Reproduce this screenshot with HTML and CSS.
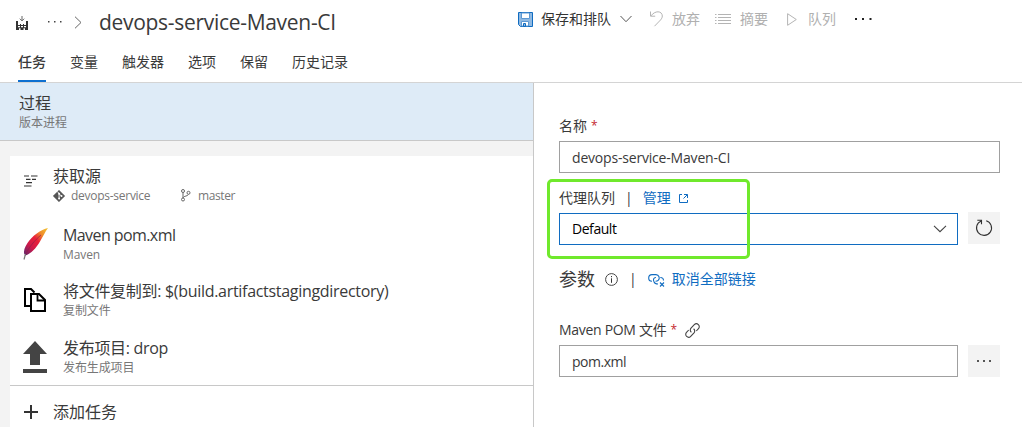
FILE: index.html
```html
<!DOCTYPE html>
<html lang="zh-CN">
<head>
<meta charset="utf-8">
<title>devops-service-Maven-CI</title>
<link rel="stylesheet" href="styles.css">
</head>
<body>
<div class="app">
  <header class="header">
    <div class="topbar">
      <div class="crumbs">
        <svg class="crumb-build" width="12" height="14" viewBox="0 0 12 14"><path d="M0 5h2v3h8V5h2v9H0z" fill="#333"/><path d="M2 7.500h2V9H2zM5 7.500h2V9H5zM8 7.500h2V9H8zM2 10h2v1.300H2zM5 10h2v1.300H5zM8 10h2v1.300H8zM3 12.300h1.500V14H3zM7.500 12.300H9V14H7.500z" fill="#fff"/><path d="M6 0v4.500M3.800 2.700L6 4.900l2.200-2.200" fill="none" stroke="#666"/></svg>
        <svg class="crumb-dots" width="16" height="4" viewBox="0 0 16 4" fill="#444"><path d="M1 1h1.500v1.500H1zM7 1h1.500v1.500H7zM13 1h1.500v1.500H13z"/></svg>
        <svg class="crumb-arrow" width="8" height="13" viewBox="0 0 8 13" fill="none" stroke="#666"><path d="M1 .7l6 5.800-6 5.800"/></svg>
        <h1 class="title">devops-service-Maven-CI</h1>
      </div>
      <div class="commands">
        <button class="command save">
          <svg width="15" height="15" viewBox="0 0 15 15"><path d="M.5.5h14v14h-12l-2-2z" fill="#8fb9e2" stroke="#106cc1"/><path d="M3.500 1h8v5.500h-8z" fill="#fff" stroke="#5c98d3"/><path d="M3.500 14v-4.500h7V14z" fill="#fff" stroke="#5c98d3"/><path d="M5.500 11.500h2v3h-2z" fill="#8fb9e2" stroke="#106cc1"/></svg>
          <span>保存和排队</span>
          <svg class="caret" width="12" height="8" viewBox="0 0 12 8" fill="none" stroke="#555"><path d="M.5 1L6 6.700 11.500 1"/></svg>
        </button>
        <button class="command discard">
          <svg width="14" height="16" viewBox="0 0 14 16" fill="none" stroke="#b4b4b4"><path d="M1.500.5v4.700h4.700M1.800 5C4 2.200 6.500.8 9 .8c2.700 0 4.300 2 4.300 4.200 0 1.700-.8 2.800-1.800 4L5.500 15.200"/></svg>
          <span>放弃</span>
        </button>
        <button class="command summary">
          <svg width="16" height="12" viewBox="0 0 16 12" stroke="#b4b4b4"><path d="M0 1.500h1.500M3 1.500h13M0 4.500h1.500M3 4.500h13M0 7.500h1.500M3 7.500h13M0 10.500h1.500M3 10.500h13"/></svg>
          <span>摘要</span>
        </button>
        <button class="command queue">
          <svg width="10" height="13" viewBox="0 0 10 13" fill="none" stroke="#b4b4b4"><path d="M.6.7l8.700 5.800-8.700 5.800z"/></svg>
          <span>队列</span>
        </button>
        <svg class="more" width="17" height="4" viewBox="0 0 17 4" fill="#222"><path d="M0 1h2v2H0zM7 1h2v2H7zM14.500 1h2v2h-2z"/></svg>
      </div>
    </div>
    <nav class="tabs">
      <a class="tab active">任务</a><a class="tab">变量</a><a class="tab">触发器</a><a class="tab">选项</a><a class="tab">保留</a><a class="tab">历史记录</a>
    </nav>
  </header>
  <main class="content">
    <section class="pipeline">
      <div class="process">
        <div class="process-title">过程</div>
        <div class="process-sub">版本进程</div>
      </div>
      <div class="phase">
        <div class="task source">
          <div class="task-icon">
            <svg width="15" height="12" viewBox="0 0 15 12" stroke="#333" stroke-width="1.200"><path d="M1 1h5M8 1h6.500M3 4.300h4.500M9 4.300h4M3 7.600h6M1 11h7.500"/></svg>
          </div>
          <div class="task-text">
            <div class="task-title">获取源</div>
            <div class="task-sub source-info">
              <svg width="12" height="12" viewBox="0 0 12 12"><path d="M6 .2L11.800 6 6 11.800.2 6z" fill="#555" stroke="#555" stroke-linejoin="round" stroke-width=".5"/><path d="M4.500 1.500l1.600 2.200v5M6.200 3.900l2.300 2.200" fill="none" stroke="#fff" stroke-width=".9"/><circle cx="6.100" cy="8.600" r="1" fill="#fff"/><circle cx="8.500" cy="6.100" r="1" fill="#fff"/><circle cx="6.100" cy="3.800" r="1" fill="#fff"/></svg>
              <span class="repo">devops-service</span>
              <svg width="10" height="13" viewBox="0 0 10 13" fill="none" stroke="#666"><circle cx="2" cy="2" r="1.500"/><circle cx="2" cy="10.500" r="1.500"/><circle cx="7.500" cy="3.800" r="1.500"/><path d="M2 3.500V9M7.300 5.400C7 7.500 3 6.500 2 8.800"/></svg>
              <span class="branch">master</span>
            </div>
          </div>
        </div>
        <div class="task">
          <div class="task-icon">
            <svg width="26" height="32" viewBox="0 0 26 32"><defs><linearGradient id="feather" x1="1" y1="0" x2="0" y2="1"><stop offset="0" stop-color="#f4c62c"/><stop offset=".25" stop-color="#ee8a2c"/><stop offset=".45" stop-color="#e8203a"/><stop offset=".7" stop-color="#d01848"/><stop offset="1" stop-color="#5b2870"/></linearGradient></defs><path d="M25 0C18 1.500 9 8 4.500 15 1.500 19.500.5 23 1.200 26L3 27.200C8 25.500 13 20.500 17 13.500 20 8.500 22 4 25 0z" fill="url(#feather)"/><path d="M18 7C12 12 5 20 2 28" fill="none" stroke="#8f2047" stroke-width=".7"/><path d="M2.500 26L1 31.500" stroke="#777" stroke-width="1.200"/></svg>
          </div>
          <div class="task-text"><div class="task-title maven">Maven pom.xml</div><div class="task-sub">Maven</div></div>
        </div>
        <div class="task">
          <div class="task-icon">
            <svg width="23" height="24" viewBox="0 0 23 24" fill="none" stroke="#000" stroke-width="2"><path d="M7 18H2V1h6l3.500 3.500"/><path d="M8 6h8l6 6v11H8z" fill="#fff"/><path d="M14.500 6v6.500H22" stroke-width="1.800"/></svg>
          </div>
          <div class="task-text"><div class="task-title copy">将文件复制到: $(build.artifactstagingdirectory)</div><div class="task-sub">复制文件</div></div>
        </div>
        <div class="task">
          <div class="task-icon">
            <svg width="24" height="32" viewBox="0 0 24 32" fill="#444"><path d="M12 0l12 13h-7v11H7V13H0zM0 28h24v4H0z"/></svg>
          </div>
          <div class="task-text"><div class="task-title drop">发布项目: drop</div><div class="task-sub">发布生成项目</div></div>
        </div>
        <div class="add-task">
          <svg width="14" height="14" viewBox="0 0 14 14" stroke="#333" stroke-width="2"><path d="M7 0v14M0 7h14"/></svg>
          <span>添加任务</span>
        </div>
      </div>
    </section>
    <section class="details">
      <div class="label name-label">名称 <span class="required">*</span></div>
      <div class="field name-field">devops-service-Maven-CI</div>
      <div class="label queue-label">
        <span>代理队列</span><span class="bar">|</span><a class="link">管理</a>
        <svg width="9" height="9" viewBox="0 0 9 9" fill="none" stroke="#106cc1"><path d="M3 .5H.5v8h8V6M5 .5h3.500V4M8.300.7L4.500 4.500"/></svg>
        <div class="highlight"></div>
      </div>
      <div class="row">
        <div class="field select"><span>Default</span>
          <svg width="14" height="8" viewBox="0 0 14 8" fill="none" stroke="#444" stroke-width="1.100"><path d="M1 .8l6 5.900L13 .8"/></svg>
        </div>
        <button class="square refresh">
          <svg width="18" height="18" viewBox="0 0 18 18" fill="none" stroke="#333" stroke-width="1.100"><path d="M11.200 1.700A7.500 7.500 0 1 1 6.300 1.900M2.300 1.300h4.200v4"/></svg>
        </button>
      </div>
      <div class="params">
        <h2 class="params-title">参数</h2>
        <svg class="info" width="13" height="13" viewBox="0 0 13 13"><circle cx="6.500" cy="6.500" r="5.900" fill="none" stroke="#444"/><path d="M6.500 5.300v4.500M6.500 3v1.200" stroke="#333"/></svg>
        <span class="params-bar">|</span>
        <svg class="unlink" width="17" height="14" viewBox="0 0 17 14" fill="none" stroke="#106cc1" stroke-width="1.100"><path d="M4 8.200A3.300 3.300 0 0 1 4 1.600h4a3.300 3.300 0 0 1 2.200 5.700M10.200 7.300C9.500 8 8.800 8.200 7.500 8.200M6 8.600C5 7 5.300 4.500 8 4.500M12.300 4.500c2 0 3.200 1.500 3.200 3M6 8.700c.6 1.600 1.800 2.300 4 2.300" /><path d="M12 9.500l4 4M16 9.500l-4 4"/></svg>
        <a class="link">取消全部链接</a>
      </div>
      <div class="label pom-label">
        <span>Maven POM 文件</span><span class="required">*</span>
        <svg width="15" height="15" viewBox="0 0 15 15" fill="none" stroke="#444" stroke-width="1.100"><path d="M6.400 9.300A2.800 2.800 0 0 1 6 5.200L9.300 1.700a2.800 2.800 0 0 1 4.200 3.900L11.300 8M8.600 5.700A2.800 2.800 0 0 1 9 9.800l-3.300 3.500a2.800 2.800 0 0 1-4.200-3.900L3.700 7"/></svg>
      </div>
      <div class="row">
        <div class="field pom">pom.xml</div>
        <button class="square">
          <svg width="16" height="2" viewBox="0 0 16 2" fill="#555"><path d="M1 0h2v2H1zM7 0h2v2H7zM13 0h2v2h-2z"/></svg>
        </button>
      </div>
    </section>
  </main>
</div>
</body>
</html>
```

FILE: styles.css
```css
* { box-sizing: border-box; }
body {
  margin: 0;
  color: #3a3a3a;
  background: #fff;
  font: 14px/20px "Open Sans", "Noto Sans CJK SC", sans-serif;
}
svg { display: block; flex: none; }
button { font: inherit; border: 0; padding: 0; margin: 0; background: none; color: inherit; }
.app { width: 1022px; height: 427px; overflow: hidden; display: flex; flex-direction: column; }

.header { height: 83px; flex: none; border-bottom: 1px solid #d4d4d4; }
.topbar { display: flex; height: 42px; }
.crumbs { display: flex; align-items: center; width: 518px; padding-left: 16px; }
.crumb-build { margin-top: 4px; }
.crumb-dots { margin: 2px 0 0 19px; }
.crumb-arrow { margin: 2px 0 0 11px; }
.title { margin: 2px 0 0 17px; font-size: 21px; line-height: 30px; font-weight: 400; letter-spacing: -.3px; }
.commands { display: flex; align-items: center; height: 38px; }
.command { display: flex; align-items: center; white-space: nowrap; color: #b0b0b0; }
.save { color: #333; width: 131px; }
.save span { margin-left: 8px; }
.caret { margin-left: 9px; }
.discard { width: 66px; }
.discard span { margin-left: 9px; }
.summary { width: 72px; }
.summary span { margin-left: 9px; }
.queue { width: 68px; }
.queue span { margin-left: 11px; }

.tabs { display: flex; gap: 24px; height: 40px; padding-left: 18px; }
.tab { height: 40px; line-height: 40px; }
.tab.active { font-weight: 500; border-bottom: 2px solid #0f70d0; }

.content { display: flex; flex: 1; min-height: 0; }
.pipeline { width: 534px; border-right: 1px solid #c8c8c8; background: #f3f3f3; }
.process { height: 58px; padding: 10px 0 0 19px; background: #deebf7; border-bottom: 1px solid #c8c8c8; }
.process-title { font-size: 16px; line-height: 20px; }
.process-sub { font-size: 12px; line-height: 20px; color: #777; }
.phase { margin: 15px 0 0 10px; background: #fff; height: 280px; }
.task { display: flex; height: 56px; padding-top: 8px; }
.task-icon { width: 53px; padding-left: 13px; }
.task-title { font-size: 16px; line-height: 22px; white-space: nowrap; }
.maven { letter-spacing: -.58px; }
.copy { letter-spacing: -.3px; }
.drop { letter-spacing: -.3px; }
.task-sub { font-size: 12px; line-height: 17px; color: #777; letter-spacing: -.1px; }
.source { height: 60px; padding-top: 9px; }
.source .task-icon { width: 43px; padding-top: 10px; }
.source-info { display: flex; align-items: center; letter-spacing: -.27px; }
.repo { width: 110px; margin-left: 6px; }
.branch { margin-left: 7px; letter-spacing: -.4px; }
.task:nth-child(2) .task-icon { padding-top: 4px; }
.task:nth-child(3) .task-icon { padding-top: 8px; }
.task:nth-child(4) .task-icon { padding-top: 5px; }
.task:nth-child(4) .task-text { padding-top: 1px; }
.add-task { display: flex; align-items: center; gap: 15px; height: 53px; margin-top: 1px; padding-left: 14px; border-top: 1px solid #c8c8c8; font-size: 16px; }

.details { flex: 1; padding: 33px 22px 0 25px; }
.label { display: flex; align-items: center; height: 20px; }
.name-label { gap: 4px; }
.required { color: #c4262e; font-size: 12px; }
.field { height: 32px; padding-left: 12px; border: 1px solid #a0a0a0; line-height: 32px; }
.name-field { margin-top: 5px; letter-spacing: -.19px; }
.row { display: flex; gap: 10px; }
.row .field { width: 399px; }
.pom { letter-spacing: -.5px; }
.square { display: flex; align-items: center; justify-content: center; width: 32px; height: 32px; background: #f3f3f3; }
.refresh { margin-top: -1px; }
.link { color: #106cc1; }
.queue-label { position: relative; margin: 15px 0 5px; }
.bar { margin: 0 10px 0 10px; }
.queue-label svg { margin-left: 8px; }
.highlight { position: absolute; left: -12px; top: -9px; width: 203px; height: 80px; border: 3px solid #70e92c; border-radius: 5px; }
.select { display: flex; align-items: center; justify-content: space-between; padding-right: 10px; border-color: #106cc1; color: #000; }
.select span { letter-spacing: -.45px; }
.params { display: flex; align-items: center; height: 28px; margin-top: 20px; }
.params-title { margin: 0; width: 46px; font-size: 18px; font-weight: 400; }
.params-bar { margin: 0 11px; }
.params .unlink { margin-top: 1px; }
.params .link { margin-left: 7px; }
.pom-label { margin: 27px 0 5px; }
.pom-label > span:first-child { letter-spacing: -.3px; }
.pom-label .required { margin-left: 4px; }
.pom-label svg { margin-left: 8px; }
```
